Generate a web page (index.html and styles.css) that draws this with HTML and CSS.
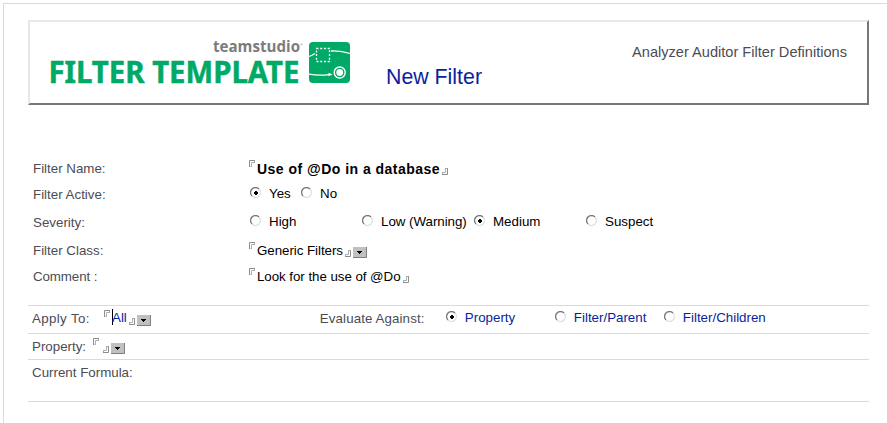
FILE: index.html
```html
<!DOCTYPE html>
<html lang="en">
<head>
<meta charset="utf-8">
<title>New Filter</title>
<link rel="stylesheet" href="styles.css">
</head>
<body>
<svg width="0" height="0" class="defs" aria-hidden="true">
  <symbol id="open" viewBox="0 0 6 7"><path d="M.5 7V.5H6" fill="none" stroke="#8c8c8c"/><path d="M2.5 7V2.5H6" fill="none" stroke="#b0b0b0"/><path d="M1.5 6.5h1M5.5 1v2" stroke="#aaa"/></symbol>
  <symbol id="close" viewBox="0 0 6 7"><path d="M5.500 0V6.500H0" fill="none" stroke="#8c8c8c"/><path d="M3.500 0V4.500H0" fill="none" stroke="#b0b0b0"/><path d="M3.500 .5h2M.5 4v2" stroke="#aaa"/></symbol>
  <symbol id="radio" viewBox="0 0 11 11"><path d="M2 9A4.800 4.800 0 0 1 9 2" fill="none" stroke="#777" stroke-width="1.300"/><path d="M9 2A4.800 4.800 0 0 1 2 9" fill="none" stroke="#dedede" stroke-width="1.100"/></symbol>
  <symbol id="radio-on" viewBox="0 0 11 11"><use href="#radio"/><path d="M5 4h2v1h1v2h-1v1h-2v-1h-1v-2h1z" fill="#000"/></symbol>
  <symbol id="drop" viewBox="0 0 14 11"><path d="M0 0h14v11H0z" fill="#c0c0c0"/><path d="M0 10.500h13.500V0" fill="none" stroke="#808080"/><path d="M4 4h5v1H8v1H7v1H6V6H5V5H4z" fill="#000"/></symbol>
</svg>
<main class="page">
  <header class="banner">
    <svg class="logo" width="304" height="60" viewBox="48 36 304 60">
      <text class="brand" x="213" y="52" textLength="87" lengthAdjust="spacingAndGlyphs">teamstudio</text>
      <circle cx="301.500" cy="44.500" r="1" fill="#bbb"/>
      <text class="product" x="48.500" y="83" textLength="251" lengthAdjust="spacingAndGlyphs">FILTER TEMPLATE</text>
      <rect x="309" y="42" width="41" height="41" rx="4" fill="#00a966"/>
      <rect x="316.500" y="48.500" width="13" height="13" fill="none" stroke="#fff" stroke-width="1.300" stroke-dasharray="2 1.700"/>
      <path d="M309 56.500Q312 55.500 315 53.500M331 51Q341 50.500 350 53.500M309 74.200Q319 76 329 74.600" fill="none" stroke="#fff" stroke-width="1.300"/>
      <path d="M328.500 72.800l4 1.700-4 1.700z" fill="#fff"/>
      <circle cx="339.700" cy="72.500" r="5.500" fill="none" stroke="#fff" stroke-width="1.400"/>
      <circle cx="339.700" cy="72.500" r="3.400" fill="#fff"/>
    </svg>
    <h1>New Filter</h1>
    <p>Analyzer Auditor Filter Definitions</p>
  </header>

  <section class="details">
    <div class="row">
      <span class="label">Filter Name:</span>
      <span class="field"><svg class="open"><use href="#open"/></svg><b>Use of @Do in a database</b><svg class="close"><use href="#close"/></svg></span>
    </div>
    <div class="row choices">
      <span class="label">Filter Active:</span>
      <label class="option yes"><svg class="radio"><use href="#radio-on"/></svg>Yes</label>
      <label class="option"><svg class="radio"><use href="#radio"/></svg>No</label>
    </div>
    <div class="row tall choices">
      <span class="label">Severity:</span>
      <label class="option wide"><svg class="radio"><use href="#radio"/></svg>High</label>
      <label class="option wide low"><svg class="radio"><use href="#radio"/></svg>Low (Warning)</label>
      <label class="option wide"><svg class="radio"><use href="#radio-on"/></svg>Medium</label>
      <label class="option wide"><svg class="radio"><use href="#radio"/></svg>Suspect</label>
    </div>
    <div class="row">
      <span class="label">Filter Class:</span>
      <span class="field"><svg class="open"><use href="#open"/></svg><span class="value">Generic Filters</span><svg class="close"><use href="#close"/></svg><svg class="drop"><use href="#drop"/></svg></span>
    </div>
    <div class="row">
      <span class="label comment">Comment :</span>
      <span class="field"><svg class="open"><use href="#open"/></svg><span class="value">Look for the use of @Do</span><svg class="close"><use href="#close"/></svg></span>
    </div>
  </section>

  <section class="rules">
    <div class="rule apply">
      <span class="rule-label">Apply To:</span>
      <span class="field"><svg class="open"><use href="#open"/></svg><i class="caret"></i><span class="blue">All</span><svg class="close"><use href="#close"/></svg><svg class="drop"><use href="#drop"/></svg></span>
      <span class="evaluate">Evaluate Against:</span>
      <label class="option against blue"><svg class="radio"><use href="#radio-on"/></svg>Property</label>
      <label class="option against blue"><svg class="radio"><use href="#radio"/></svg>Filter/Parent</label>
      <label class="option against blue"><svg class="radio"><use href="#radio"/></svg>Filter/Children</label>
    </div>
    <div class="rule property">
      <span class="rule-label">Property:</span>
      <span class="field"><svg class="open"><use href="#open"/></svg><svg class="close"><use href="#close"/></svg><svg class="drop"><use href="#drop"/></svg></span>
    </div>
    <div class="rule formula"><span class="rule-label">Current Formula:</span></div>
  </section>
</main>
</body>
</html>
```
FILE: styles.css
```css
* { box-sizing: border-box; }
body {
  margin: 0;
  padding: 3px 0 0 3px;
  height: 423px;
  overflow: hidden;
  background: #fff;
  color: #000;
  font: 13.33px/16px "Liberation Sans", Arial, sans-serif;
}
.defs { position: absolute; }
svg { flex: none; }
.page {
  height: 420px;
  border-top: 1px solid #dadada;
  border-left: 1px solid #dadada;
  padding: 16px 18px 0 24px;
}
.banner {
  display: flex;
  height: 85px;
  padding: 14px 20px 0 18px;
  border: 2px solid;
  border-color: #e8e8e8 #777 #777 #e8e8e8;
}
.brand { font: 700 16px "Open Sans", sans-serif; fill: #7c7c7c; }
.product { font: 700 31px "Noto Sans", sans-serif; fill: #00a966; stroke: #00a966; stroke-width: .5px; }
h1 {
  margin: 28px 0 0 34px;
  font-size: 21.33px;
  line-height: 26px;
  font-weight: 400;
  color: #0a1f9c;
}
.banner p {
  margin: 7px 0 0 auto;
  font-size: 14.6px;
  line-height: 18px;
  color: #4c4c55;
}
.details { padding: 56px 0 0 5px; }
.row, .field, .option, .rule { display: flex; align-items: flex-start; white-space: nowrap; }
.row { height: 26px; }
.row.tall { height: 28px; margin-top: 2px; }
.label { width: 217px; color: #4c4c55; }
.comment { letter-spacing: -.1px; }
.row .field { margin-left: -1px; }
.open { width: 6px; height: 7px; margin: -1px 2px 0 0; }
.close { width: 6px; height: 7px; margin: 7px 0 0 2px; }
.drop { width: 14px; height: 11px; margin: 4px 0 0 2px; }
.field b { font-size: 14px; letter-spacing: .48px; }
.value { letter-spacing: -.05px; }
.radio { width: 11px; height: 11px; margin-right: 8px; }
.choices .option { margin-top: -1px; }
.choices .radio { margin-top: 1px; }
.yes { width: 51px; }
.wide { width: 112px; }
.low { letter-spacing: -.03px; }
.rules { margin-top: 10px; border-top: 1px solid #dadada; }
.rule { padding-left: 4px; border-bottom: 1px solid #dadada; color: #4c4c55; }
.apply { height: 28px; padding-top: 5px; }
.property { height: 26px; padding-top: 5px; }
.formula { height: 42px; padding-top: 5px; }
.rule-label { width: 72px; }
.apply .rule-label { letter-spacing: .35px; }
.property .rule-label { width: 61px; }
.blue { color: #0a1f9c; margin-top: -1px; }
.blue .radio { margin-top: 1px; }
.caret { width: 1px; height: 16px; margin: -2px -1px 0 0; background: #000; }
.evaluate { width: 126px; margin-left: 169px; letter-spacing: .1px; }
.against { width: 109px; }
```
